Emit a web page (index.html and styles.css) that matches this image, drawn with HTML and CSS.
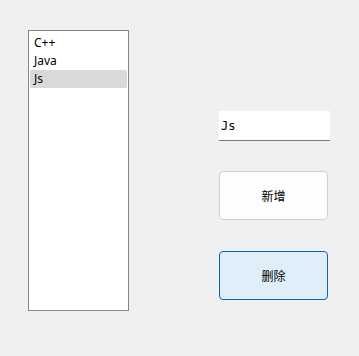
FILE: index.html
```html
<!DOCTYPE html>
<html>
<head>
	<meta charset="utf-8">
	<title>列表</title>
	<link rel="stylesheet" href="styles.css">
</head>
<body>
<div class="window">
	<ul class="list">
		<li>C++</li>
		<li>Java</li>
		<li class="current">Js</li>
	</ul>
	<div class="side">
		<input class="text" type="text" value="Js">
		<button class="button">新增</button>
		<button class="button active">删除</button>
	</div>
</div>
</body>
</html>
```

FILE: styles.css
```css
* {
	margin: 0;
	padding: 0;
	box-sizing: border-box;
}
body {
	background-color: #f0f0f0;
	font-family: "Noto Sans", "Noto Sans CJK SC", sans-serif;
	font-size: 12px;
	color: #000;
}
.window {
	display: flex;
	padding: 30px 0 0 28px;
}
.list {
	list-style: none;
	width: 101px;
	height: 281px;
	background: #fff;
	border: 1px solid #828790;
	padding: 3px 1px;
}
.list li {
	height: 18px;
	line-height: 18px;
	padding-left: 4px;
	border-radius: 2px;
}
.list li.current {
	background-color: #d9d9d9;
}
.side {
	display: flex;
	flex-direction: column;
	margin: 81px 0 0 90px;
}
.text {
	width: 111px;
	height: 30px;
	border: none;
	border-bottom: 1px solid #7a7a7a;
	background: #fff;
	padding: 0 2px;
	font-family: "DejaVu Sans Mono", monospace;
	font-size: 12px;
	outline: none;
}
.button {
	width: 109px;
	height: 49px;
	margin-top: 30px;
	background: #fdfdfd;
	border: 1px solid #d0d0d0;
	border-radius: 4px;
	font-family: "Noto Sans CJK SC", sans-serif;
	font-size: 12px;
	color: #000;
}
.button.active {
	margin-top: 31px;
	background: #e0eef9;
	border-color: #0067c0;
}
```
